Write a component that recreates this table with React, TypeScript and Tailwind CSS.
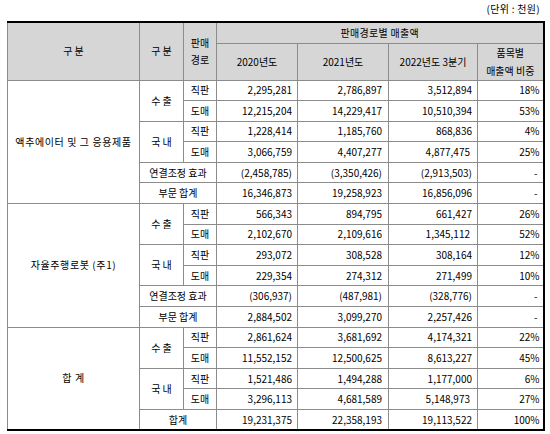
import React from 'react';

type Row = {
  ch?: string; // 수 출 / 국 내
  sub?: string; // 직판 / 도매
  wide?: string; // label spanning two columns
  v: [string, string, string, string];
  shift?: boolean; // 2022 value sits a bit left
};

type Group = { name: string; rows: Row[] };

const groups: Group[] = [
  {
    name: '액추에이터 및 그 응용제품',
    rows: [
      { ch: '수 출', sub: '직판', v: ['2,295,281', '2,786,897', '3,512,894', '18%'] },
      { sub: '도매', v: ['12,215,204', '14,229,417', '10,510,394', '53%'] },
      { ch: '국 내', sub: '직판', v: ['1,228,414', '1,185,760', '868,836', '4%'] },
      { sub: '도매', v: ['3,066,759', '4,407,277', '4,877,475', '25%'], shift: true },
      { wide: '연결조정 효과', v: ['(2,458,785)', '(3,350,426)', '(2,913,503)', '-'] },
      { wide: '부문 합계', v: ['16,346,873', '19,258,923', '16,856,096', '-'] },
    ],
  },
  {
    name: '자율주행로봇 (주1)',
    rows: [
      { ch: '수 출', sub: '직판', v: ['566,343', '894,795', '661,427', '26%'] },
      { sub: '도매', v: ['2,102,670', '2,109,616', '1,345,112', '52%'], shift: true },
      { ch: '국 내', sub: '직판', v: ['293,072', '308,528', '308,164', '12%'] },
      { sub: '도매', v: ['229,354', '274,312', '271,499', '10%'] },
      { wide: '연결조정 효과', v: ['(306,937)', '(487,981)', '(328,776)', '-'] },
      { wide: '부문 합계', v: ['2,884,502', '3,099,270', '2,257,426', '-'] },
    ],
  },
  {
    name: '합 계',
    rows: [
      { ch: '수 출', sub: '직판', v: ['2,861,624', '3,681,692', '4,174,321', '22%'] },
      { sub: '도매', v: ['11,552,152', '12,500,625', '8,613,227', '45%'] },
      { ch: '국 내', sub: '직판', v: ['1,521,486', '1,494,288', '1,177,000', '6%'] },
      { sub: '도매', v: ['3,296,113', '4,681,589', '5,148,973', '27%'], shift: true },
      { wide: '합계', v: ['19,231,375', '22,358,193', '19,113,522', '100%'] },
    ],
  },
];

const cell = 'border border-[#8c8c8c] p-0 align-middle';

const App: React.FC = () => {
  return (
    <div
      className="w-[550px] h-[434px] bg-white text-black text-[10px] leading-none pl-[7px]"
      style={{ fontFamily: '"Noto Sans CJK KR", "Noto Sans", sans-serif' }}
    >
      {/* unit caption */}
      <div className="h-[21px] w-[536px] flex items-center justify-end pr-[3px] pb-[4px] text-[10px] tracking-[0.3px]">
        (단위 : 천원)
      </div>

      <table className="w-[536px] table-fixed border-collapse border-t-2 border-b-2 border-r-2 border-l border-black">
        <colgroup>
          <col className="w-[132px]" />
          <col className="w-[44px]" />
          <col className="w-[33px]" />
          <col className="w-[81px]" />
          <col className="w-[91px]" />
          <col className="w-[89px]" />
          <col className="w-[66px]" />
        </colgroup>
        <thead>
          <tr className="h-[21px] bg-[#d6d6d6]">
            <th rowSpan={2} className={`${cell} font-normal text-center`}>구 분</th>
            <th rowSpan={2} className={`${cell} font-normal text-center`}>구 분</th>
            <th rowSpan={2} className={`${cell} font-normal text-center leading-[17px]`}>
              판매
              <br />
              경로
            </th>
            <th colSpan={4} className={`${cell} font-normal text-center tracking-[0.3px]`}>판매경로별 매출액</th>
          </tr>
          <tr className="h-[35px] bg-[#d6d6d6]">
            <th className={`${cell} font-normal text-center`}>2020년도</th>
            <th className={`${cell} font-normal text-center`}>2021년도</th>
            <th className={`${cell} font-normal text-center`}>2022년도 3분기</th>
            <th className={`${cell} font-normal text-center leading-[18px]`}>
              품목별
              <br />
              매출액 비중
            </th>
          </tr>
        </thead>
        <tbody>
          {groups.map((g) =>
            g.rows.map((r, i) => (
              <tr key={g.name + i} className="h-[20.6px]">
                {i === 0 && (
                  <td rowSpan={g.rows.length} className={`${cell} text-center tracking-[0.6px]`}>
                    {g.name}
                  </td>
                )}
                {r.wide ? (
                  <td colSpan={2} className={`${cell} text-center`}>
                    {r.wide}
                  </td>
                ) : (
                  <>
                    {r.ch && (
                      <td rowSpan={2} className={`${cell} text-center`}>
                        {r.ch}
                      </td>
                    )}
                    <td className={`${cell} text-center`}>{r.sub}</td>
                  </>
                )}
                <td className={`${cell} text-right pr-[5px]`}>{r.v[0]}</td>
                <td className={`${cell} text-right pr-[6px]`}>{r.v[1]}</td>
                <td className={`${cell} text-right ${r.shift ? 'pr-[7px]' : 'pr-[5px]'}`}>{r.v[2]}</td>
                <td className={`${cell} text-right ${r.v[3] === '-' ? 'pr-[5px]' : 'pr-[3px]'}`}>{r.v[3]}</td>
              </tr>
            ))
          )}
        </tbody>
      </table>
    </div>
  );
};

export default App;
